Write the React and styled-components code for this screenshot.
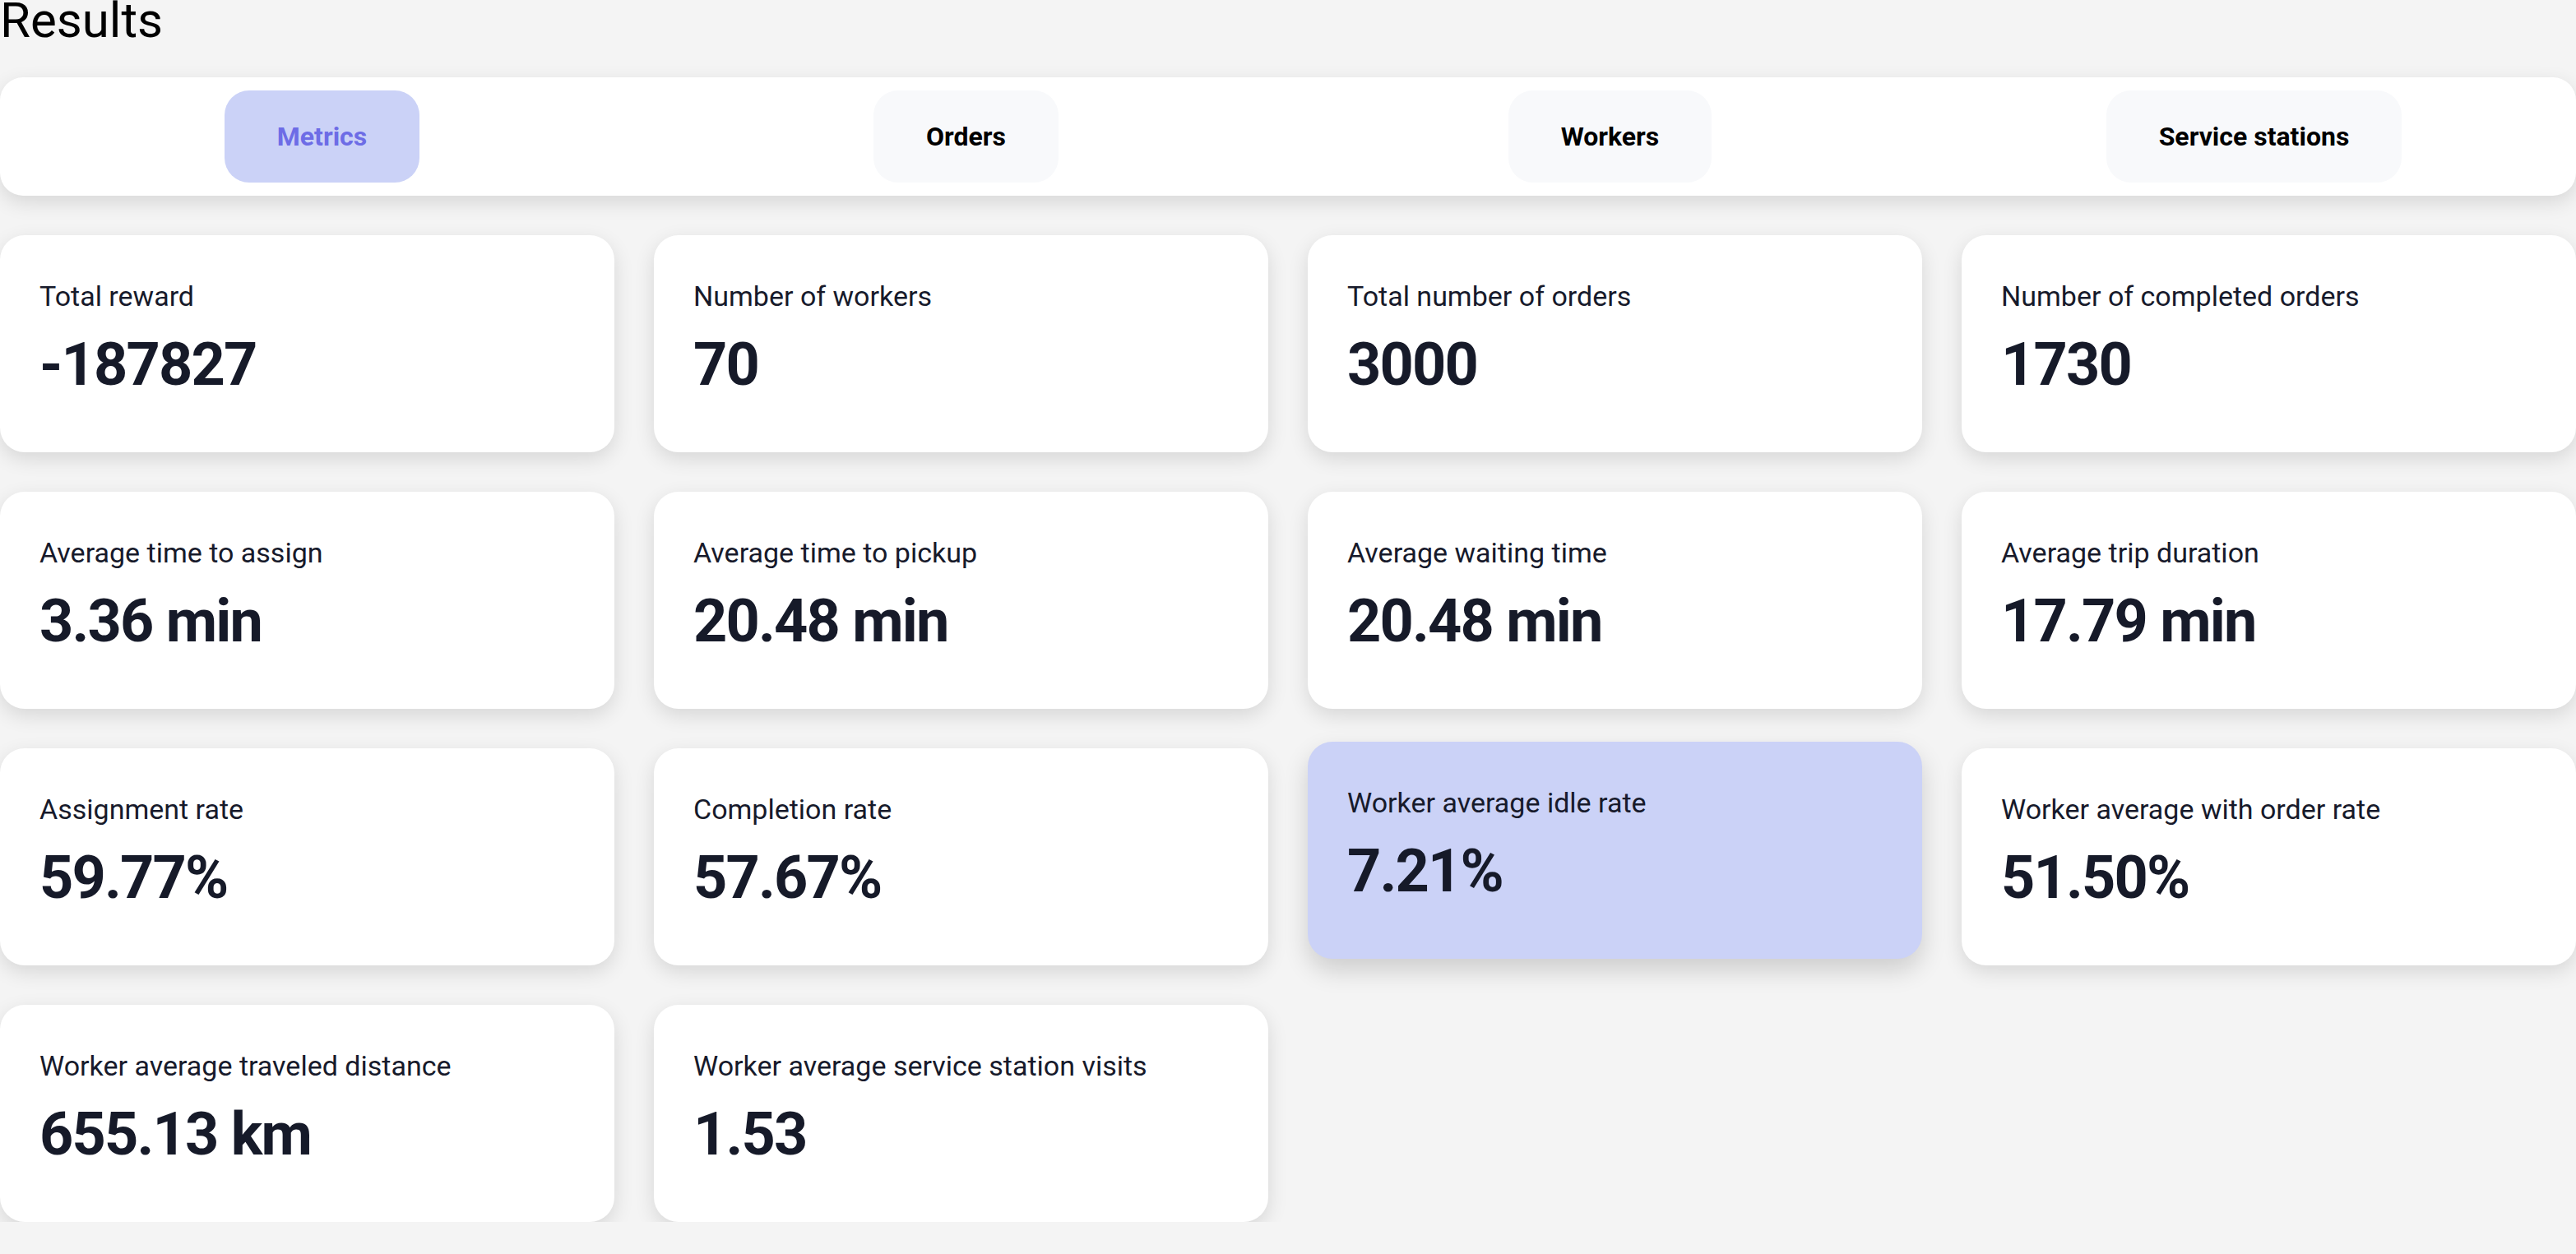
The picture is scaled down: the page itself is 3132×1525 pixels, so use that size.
import React from "react";
import styled, { createGlobalStyle } from "styled-components";

const GlobalStyle = createGlobalStyle`
  html, body {
    margin: 0;
    padding: 0;
    background: #f4f4f4;
    font-family: Roboto, "Liberation Sans", Arial, sans-serif;
  }
  * { box-sizing: border-box; }
`;

const Page = styled.div`
  display: flex;
  flex-direction: column;
  width: 3132px;
`;

const Title = styled.h1`
  margin: 0 0 45px 0;
  font-size: 60px;
  line-height: 49px;
  font-weight: 400;
  color: #000;
`;

const TabBar = styled.nav`
  display: grid;
  grid-template-columns: repeat(4, 1fr);
  align-items: center;
  justify-items: center;
  padding: 16px 0;
  background: #fff;
  border-radius: 28px;
  box-shadow: 0 8px 24px rgba(0, 0, 0, 0.12);
  margin-bottom: 48px;
`;

const Tab = styled.button`
  height: 112px;
  padding: 0 64px;
  border: none;
  border-radius: 30px;
  font-family: Roboto, "Liberation Sans", Arial, sans-serif;
  font-size: 32px;
  font-weight: 700;
  cursor: pointer;
  background: ${(p) => (p.$active ? "#cbd2f7" : "#f8f9fb")};
  color: ${(p) => (p.$active ? "#6d6ce6" : "#000")};
`;

const Grid = styled.div`
  display: grid;
  grid-template-columns: repeat(4, 1fr);
  grid-auto-rows: 264px;
  gap: 48px;
`;

const Card = styled.div`
  display: flex;
  flex-direction: column;
  padding: 54px 48px 0;
  border-radius: 30px;
  background: ${(p) => (p.$highlight ? "#cbd2f7" : "#fff")};
  box-shadow: ${(p) =>
    p.$highlight
      ? "0 14px 30px rgba(0, 0, 0, 0.16)"
      : "0 8px 24px rgba(0, 0, 0, 0.12)"};
  transform: ${(p) => (p.$highlight ? "translateY(-8px)" : "none")};
`;

const Label = styled.div`
  font-size: 34px;
  line-height: 40px;
  font-weight: 400;
  color: #171a2b;
  margin-bottom: 22px;
`;

const Value = styled.div`
  font-size: 72px;
  line-height: 84px;
  font-weight: 700;
  letter-spacing: -0.025em;
  color: #161a29;
`;

const tabs = ["Metrics", "Orders", "Workers", "Service stations"];

const metrics = [
  ["Total reward", "-187827"],
  ["Number of workers", "70"],
  ["Total number of orders", "3000"],
  ["Number of completed orders", "1730"],
  ["Average time to assign", "3.36 min"],
  ["Average time to pickup", "20.48 min"],
  ["Average waiting time", "20.48 min"],
  ["Average trip duration", "17.79 min"],
  ["Assignment rate", "59.77%"],
  ["Completion rate", "57.67%"],
  ["Worker average idle rate", "7.21%", true],
  ["Worker average with order rate", "51.50%"],
  ["Worker average traveled distance", "655.13 km"],
  ["Worker average service station visits", "1.53"],
];

export default function App() {
  return (
    <>
      <GlobalStyle />
      <Page>
        <Title>Results</Title>
        <TabBar>
          {tabs.map((t, i) => (
            <Tab key={t} $active={i === 0}>
              {t}
            </Tab>
          ))}
        </TabBar>
        <Grid>
          {metrics.map(([label, value, hl]) => (
            <Card key={label} $highlight={hl}>
              <Label>{label}</Label>
              <Value>{value}</Value>
            </Card>
          ))}
        </Grid>
      </Page>
    </>
  );
}
